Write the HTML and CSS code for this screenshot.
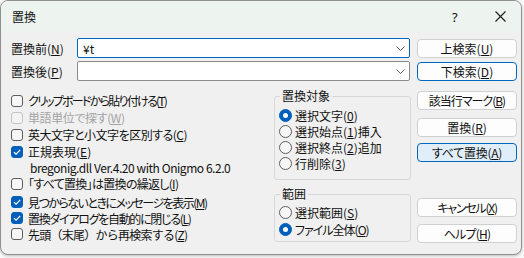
FILE: index.html
```html
<!DOCTYPE html>
<html lang="ja">
<head>
<meta charset="utf-8">
<title>置換</title>
<link rel="stylesheet" href="styles.css">
</head>
<body>
<div class="dialog">
  <div class="titlebar">
    <span class="title">置換</span>
    <span class="help">?</span>
    <span class="close"><svg width="11" height="11" viewBox="0 0 11 11"><path d="M0.5 0.5 L10.5 10.5 M10.5 0.5 L0.5 10.5" stroke="#1a1a1a" stroke-width="1.1" fill="none"/></svg></span>
  </div>
  <div class="content">
    <div class="row">
      <span class="lbl">置換前(<u>N</u>)</span>
      <div class="combo focus"><span class="val">¥t</span><svg class="chev" width="9" height="5" viewBox="0 0 9 5"><path d="M0.5 0.5 L4.5 4.5 L8.5 0.5" stroke="#606060" stroke-width="1" fill="none"/></svg></div>
      <button class="btn">上検索(<u>U</u>)</button>
    </div>
    <div class="row row2">
      <span class="lbl">置換後(<u>P</u>)</span>
      <div class="combo"><span class="val"></span><svg class="chev" width="9" height="5" viewBox="0 0 9 5"><path d="M0.5 0.5 L4.5 4.5 L8.5 0.5" stroke="#606060" stroke-width="1" fill="none"/></svg></div>
      <button class="btn btn-default">下検索(<u>D</u>)</button>
    </div>
    <div class="lower">
      <div class="left">
        <div class="chk"><span class="box"></span><span class="t1">クリップボードから貼り付ける(<u>T</u>)</span></div>
        <div class="chk disabled"><span class="box"></span><span class="t2">単語単位で探す(<u>W</u>)</span></div>
        <div class="chk"><span class="box"></span><span class="t3">英大文字と小文字を区別する(<u>C</u>)</span></div>
        <div class="chk"><span class="box on"><svg width="12" height="12" viewBox="0 0 12 12"><path d="M3 6.2 L5.1 8.2 L9.2 3.9" stroke="#fff" stroke-width="1.2" fill="none"/></svg></span><span>正規表現(<u>E</u>)</span></div>
        <div class="info">bregonig.dll Ver.4.20 with Onigmo 6.2.0</div>
        <div class="chk"><span class="box"></span><span class="t5">「すべて置換」は置換の繰返し(<u>I</u>)</span></div>
        <div class="chk tight first"><span class="box on"><svg width="12" height="12" viewBox="0 0 12 12"><path d="M3 6.2 L5.1 8.2 L9.2 3.9" stroke="#fff" stroke-width="1.2" fill="none"/></svg></span><span class="t6">見つからないときにメッセージを表示(<u>M</u>)</span></div>
        <div class="chk tight"><span class="box on"><svg width="12" height="12" viewBox="0 0 12 12"><path d="M3 6.2 L5.1 8.2 L9.2 3.9" stroke="#fff" stroke-width="1.2" fill="none"/></svg></span><span class="t7">置換ダイアログを自動的に閉じる(<u>L</u>)</span></div>
        <div class="chk tight"><span class="box"></span><span class="t8">先頭（末尾）から再検索する(<u>Z</u>)</span></div>
      </div>
      <div class="mid">
        <fieldset class="grp grp1">
          <legend>置換対象</legend>
          <div class="rad"><span class="dot on"></span>選択文字(<u>0</u>)</div>
          <div class="rad"><span class="dot"></span>選択始点(<u>1</u>)挿入</div>
          <div class="rad"><span class="dot"></span>選択終点(<u>2</u>)追加</div>
          <div class="rad"><span class="dot"></span>行削除(<u>3</u>)</div>
        </fieldset>
        <fieldset class="grp grp2">
          <legend>範囲</legend>
          <div class="rad rad2"><span class="dot"></span>選択範囲(<u>S</u>)</div>
          <div class="rad rad2"><span class="dot on"></span><span class="tf">ファイル全体(<u>O</u>)</span></div>
        </fieldset>
      </div>
      <div class="right">
        <button class="btn b1"><span class="tb1">該当行マーク(<u>B</u>)</span></button>
        <button class="btn b2">置換(<u>R</u>)</button>
        <button class="btn btn-hot b3"><span class="tb3">すべて置換(<u>A</u>)</span></button>
        <button class="btn b4"><span class="tb4">キャンセル(<u>X</u>)</span></button>
        <button class="btn b5"><span class="tb5">ヘルプ(<u>H</u>)</span></button>
      </div>
    </div>
  </div>
</div>
</body>
</html>
```
FILE: styles.css
```css
* {
  box-sizing: border-box;
  font-feature-settings: "palt" 1;
}
html, body { margin: 0; padding: 0; }
body {
  width: 524px;
  height: 258px;
  background: #f9f9f9;
  font-family: "Noto Sans CJK JP", sans-serif;
  font-size: 12px;
  color: #111;
  overflow: hidden;
}
u { text-decoration: underline; text-underline-offset: 1px; }
.dialog {
  width: 522px;
  height: 255px;
  border: 1px solid #8f8f8f;
  border-radius: 8px;
  background: #f0f0f0;
  overflow: hidden;
  box-shadow: 0 1px 3px rgba(0,0,0,0.25);
}
.titlebar {
  height: 31px;
  background: #edf3ef;
  display: flex;
  align-items: center;
  padding-left: 11px;
}
.title { flex: 1; font-size: 12px; }
.help { width: 10px; font-size: 13px; margin-right: 33px; font-family: "Noto Sans", sans-serif; }
.close { width: 11px; height: 11px; margin-right: 15px; display: flex; }
.content { padding: 6px 0 0 9px; }
.row { display: flex; align-items: center; height: 20px; }
.row2 { margin-top: 3px; }
.lbl { width: 67px; padding-left: 1px; }
.combo {
  width: 333px;
  height: 20px;
  background: #fff;
  border: 1px solid #8a8a8a;
  border-radius: 2px;
  display: flex;
  align-items: center;
  padding-left: 5px;
  padding-right: 4px;
}
.combo.focus { border-color: #0067c0; }
.val { flex: 1; }
.btn {
  font-family: inherit;
  font-size: 12px;
  color: #111;
  width: 100px;
  height: 19px;
  padding: 0;
  background: #fdfdfd;
  border: 1px solid #d0d0d0;
  border-radius: 4px;
  line-height: 17px;
  text-align: center;
}
.row .btn { margin-left: 7px; align-self: flex-end; }
.btn-default { border-color: #0067c0; }
.btn-hot { border-color: #0067c0; background: #e0eef9; }
.lower { display: flex; margin-top: 7px; }
.left { width: 264px; padding-top: 4px; padding-left: 1px; }
.chk { height: 17px; display: flex; align-items: center; white-space: nowrap; }
.chk.tight { height: 16px; }
.chk.first { margin-top: 2px; }
.t1 { letter-spacing: -1.75px; }
.t2 { letter-spacing: -0.4px; }
.t3 { letter-spacing: -0.5px; }
.t5 { letter-spacing: -0.7px; }
.t6 { letter-spacing: -1.5px; }
.t7 { letter-spacing: -1.3px; }
.t8 { letter-spacing: -0.75px; font-feature-settings: normal; }
.tf { letter-spacing: -1px; }
.tb1 { letter-spacing: -1px; }
.tb3 { letter-spacing: -0.25px; }
.tb4 { letter-spacing: -1.25px; }
.tb5 { letter-spacing: -0.8px; }
.box {
  width: 12px; height: 12px;
  border: 1px solid #5d5d5d;
  border-radius: 3px;
  background: #f6f6f6;
  margin-right: 5px;
  flex: none;
  display: flex;
}
.box.on { background: #005fb8; border-color: #005fb8; }
.box.on svg { margin: -1px; }
.disabled { color: #a3a3a3; }
.disabled .box { border-color: #c4c4c4; background: #f3f3f3; }
.info { height: 15px; display: flex; align-items: center; padding-left: 19px; font-size: 12px; letter-spacing: -0.45px; }
.mid { width: 137px; }
.grp {
  margin: 0;
  border: 1px solid #d7d7d7;
  border-radius: 3px;
  padding: 3px 0 8px 4px;
}
.grp legend { padding: 0 2px; margin-left: 1px; line-height: 16px; }
.grp2 { margin-top: 6px; padding-top: 2px; padding-bottom: 3px; }
.rad { height: 16px; display: flex; align-items: center; white-space: nowrap; }
.rad2 { height: 17px; }
.dot {
  width: 13px; height: 13px;
  border-radius: 50%;
  border: 1px solid #5d5d5d;
  background: #f6f6f6;
  margin-right: 3px;
  flex: none;
  display: flex; align-items: center; justify-content: center;
}
.dot.on { background: #005fb8; border-color: #005fb8; }
.dot.on::after { content: ""; width: 5px; height: 5px; border-radius: 50%; background: #fff; }
.right { margin-left: 6px; display: flex; flex-direction: column; }
.b1 { margin-top: 3px; }
.b2 { margin-top: 8px; }
.b3 { margin-top: 6px; }
.b4 { margin-top: 36px; }
.b5 { margin-top: 7px; }
```
